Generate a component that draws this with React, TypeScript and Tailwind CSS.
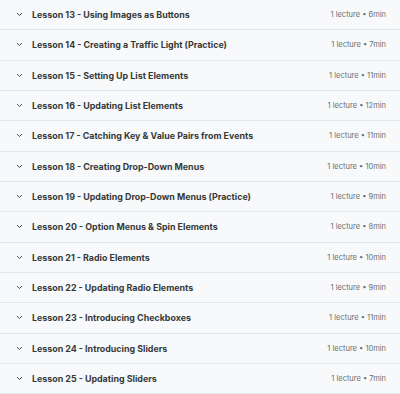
import React from "react";

const lessons: [string, string][] = [
  ["Lesson 13 - Using Images as Buttons", "6min"],
  ["Lesson 14 - Creating a Traffic Light (Practice)", "7min"],
  ["Lesson 15 - Setting Up List Elements", "11min"],
  ["Lesson 16 - Updating List Elements", "12min"],
  ["Lesson 17 - Catching Key & Value Pairs from Events", "11min"],
  ["Lesson 18 - Creating Drop-Down Menus", "10min"],
  ["Lesson 19 - Updating Drop-Down Menus (Practice)", "9min"],
  ["Lesson 20 - Option Menus & Spin Elements", "8min"],
  ["Lesson 21 - Radio Elements", "10min"],
  ["Lesson 22 - Updating Radio Elements", "9min"],
  ["Lesson 23 - Introducing Checkboxes", "11min"],
  ["Lesson 24 - Introducing Sliders", "10min"],
  ["Lesson 25 - Updating Sliders", "7min"],
];

function Chevron() {
  return (
    <svg width="7" height="5" viewBox="0 0 7 5" className="shrink-0">
      <path d="M1.3 1.3 L3.5 3.5 L5.7 1.3" fill="none" stroke="#4a4d50" strokeWidth="1" strokeLinecap="round" strokeLinejoin="round" />
    </svg>
  );
}

export default function App() {
  return (
    <div className="w-[400px] h-[394px] overflow-hidden bg-[#f7f9fa]" style={{ fontFamily: "Inter, 'Noto Sans', sans-serif" }}>
      {lessons.map(([title, dur], i) => (
        <div key={i} className="h-[30.33px] flex items-center border-b border-[#e2e6e9] pl-[16px] pr-[14px]">
          <Chevron />
          <span className="ml-[9px] text-[8.9px] font-bold text-[#36393b]">{title}</span>
          <span className="ml-auto text-[7.5px] text-[#6a6f73]">1 lecture • {dur}</span>
        </div>
      ))}
    </div>
  );
}
